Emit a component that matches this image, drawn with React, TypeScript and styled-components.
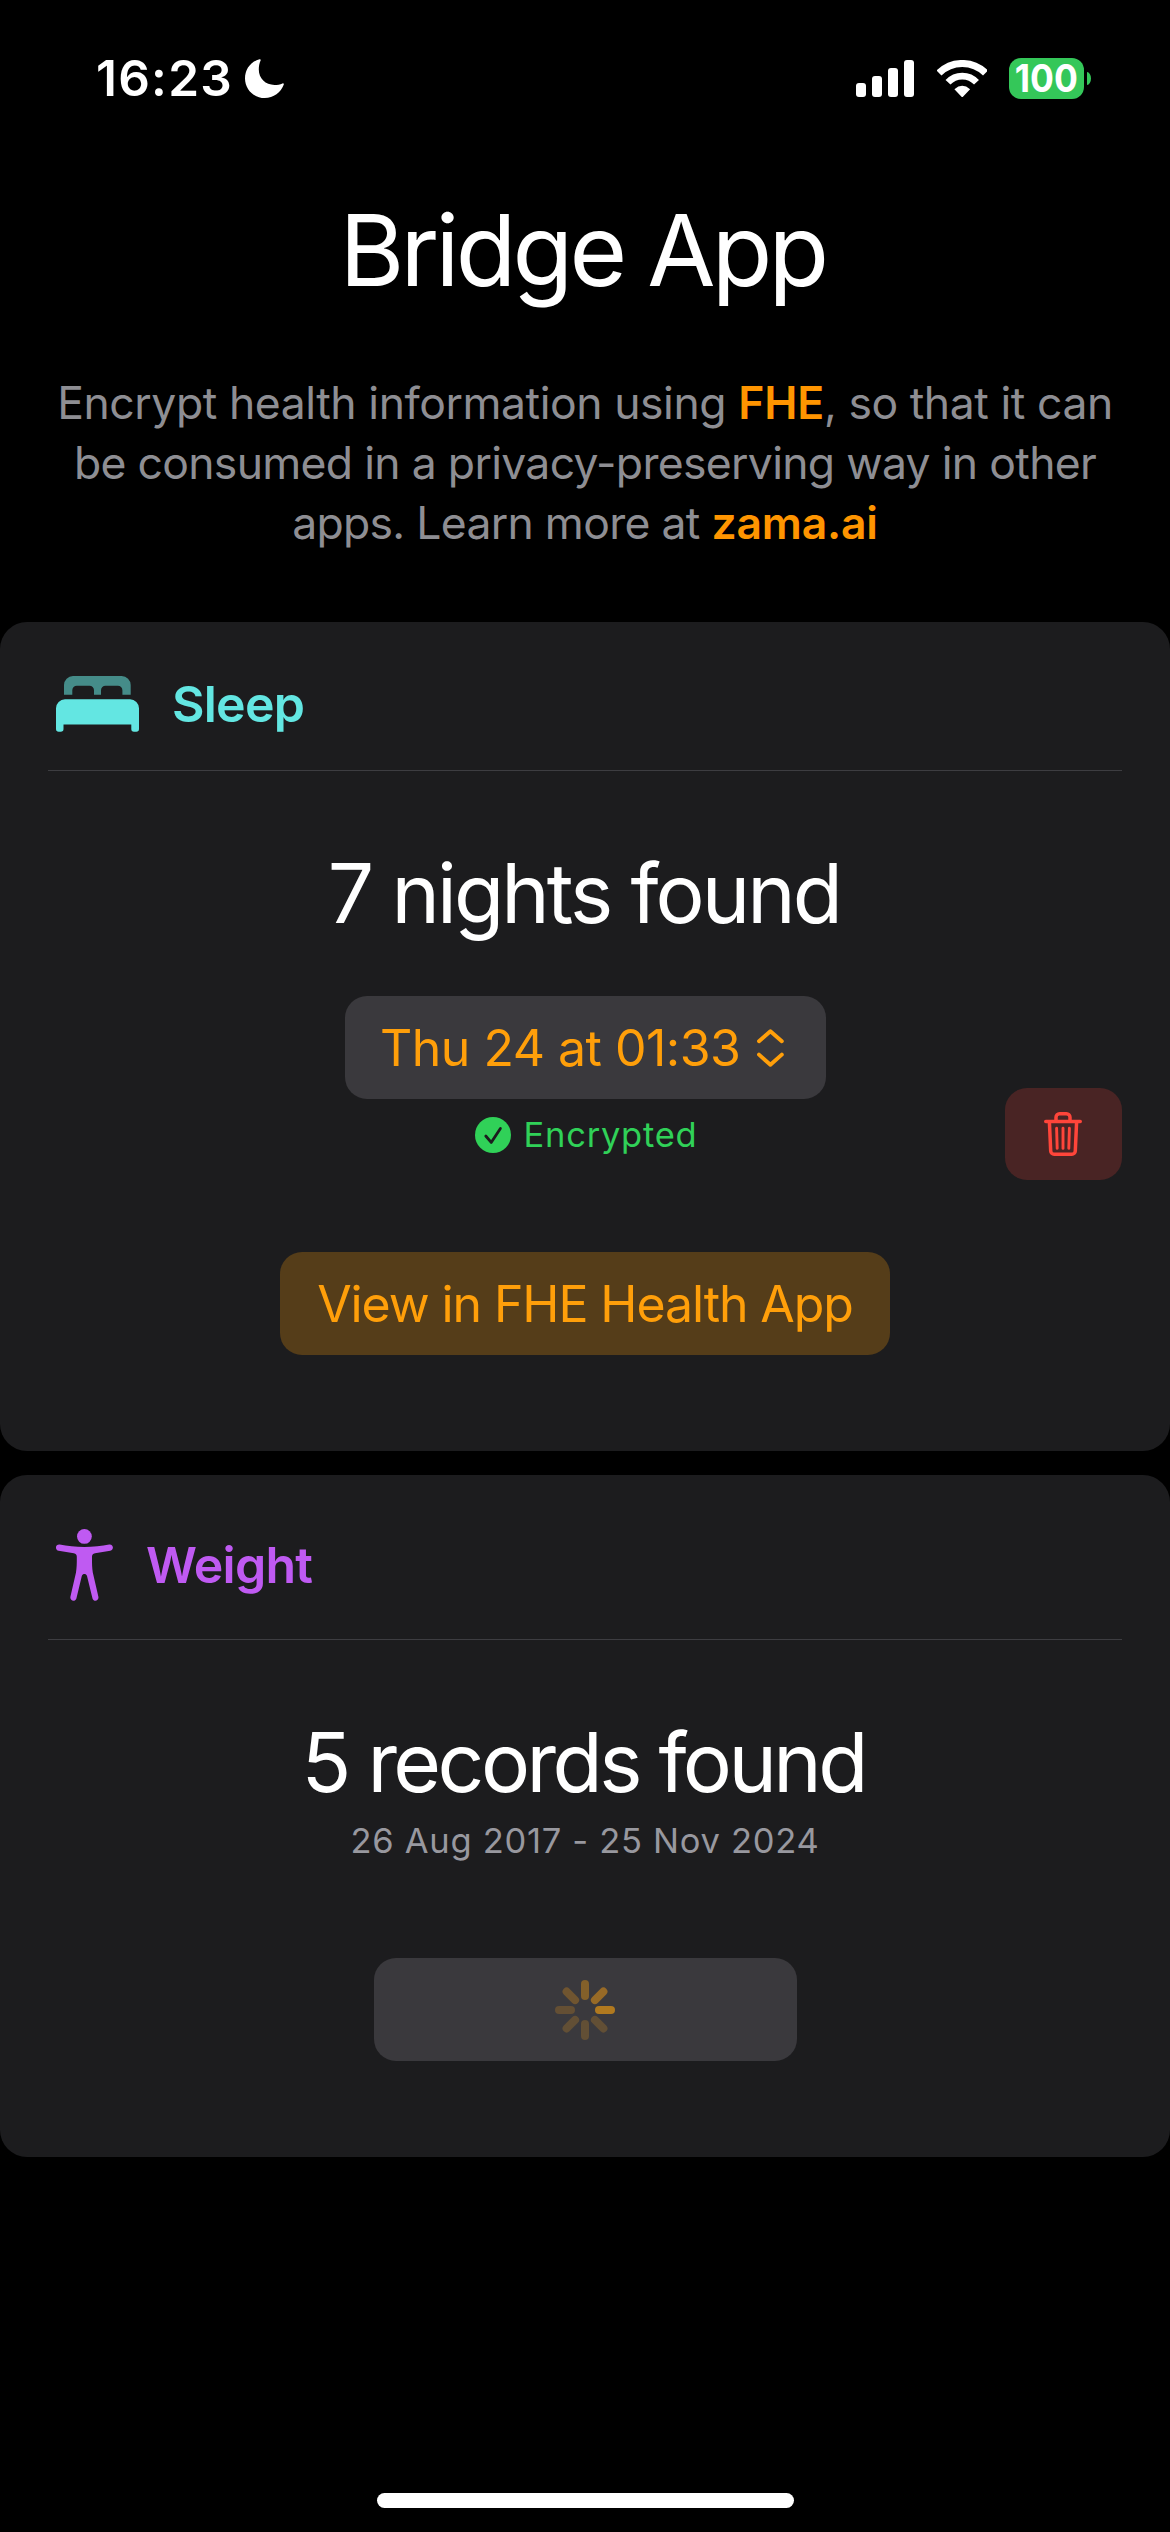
import React from 'react';
import styled, { createGlobalStyle } from 'styled-components';

const GlobalStyle = createGlobalStyle`
  *, *::before, *::after { box-sizing: border-box; }
  body {
    margin: 0;
    background: #000;
    color: #fff;
    font-family: Inter, "Liberation Sans", sans-serif;
  }
  svg { display: block; flex: none; }
  button { font: inherit; border: 0; margin: 0; padding: 0; }
`;

const Screen = styled.main`
  display: flex;
  flex-direction: column;
  width: 1170px;
  height: 2532px;
  background: #000;
  overflow: hidden;
`;

const StatusBar = styled.header`
  display: flex;
  align-items: center;
  justify-content: space-between;
  height: 60px;
  margin-top: 48px;
  padding: 0 79px 0 96px;
`;

const Clock = styled.div`
  display: flex;
  align-items: center;
  gap: 12px;
  font-size: 49.5px;
  font-weight: 570;
  line-height: 60px;
  letter-spacing: 1.25px;
`;

const Indicators = styled.div`
  display: flex;
  align-items: center;
`;

const Signal = styled.div`
  display: flex;
  align-items: flex-end;
  gap: 6px;
  height: 37px;
`;

const SignalBar = styled.i<{ $height: number }>`
  width: 10px;
  height: ${p => p.$height}px;
  border-radius: 3px;
  background: #fff;
`;

const WifiIcon = styled.svg`
  margin: 0 22px 0 22.5px;
`;

const Battery = styled.div`
  display: flex;
  align-items: center;
  justify-content: center;
  width: 75px;
  height: 41px;
  border-radius: 12px;
  background: #34c759;
`;

const BatteryLevel = styled.span`
  font-size: 38.5px;
  font-weight: 700;
  line-height: 41px;
  transform: scaleX(0.92);
`;

const BatteryCap = styled.i`
  width: 4px;
  height: 13px;
  margin-left: 3px;
  border-radius: 0 4px 4px 0 / 0 6.5px 6.5px 0;
  background: #34c759;
`;

const Title = styled.h1`
  margin: 82px 0 63px;
  padding-right: 5px;
  font-size: 99px;
  font-weight: 400;
  line-height: 120px;
  letter-spacing: -3.82px;
  text-align: center;
`;

const Intro = styled.p`
  margin: 0 0 69px;
  color: #8e8e93;
  font-size: 44.5px;
  line-height: 60px;
  text-align: center;
`;

const IntroLine = styled.span<{ $spacing: number }>`
  display: block;
  white-space: nowrap;
  letter-spacing: ${p => p.$spacing}px;
`;

const Link = styled.a`
  color: #ff9500;
  font-weight: 600;
  letter-spacing: -0.2px;
`;

const Card = styled.section`
  display: flex;
  flex-direction: column;
  margin-bottom: 24px;
  padding: 0 48px 96px;
  border-radius: 27px;
  background: #1c1c1e;
`;

const CardHeader = styled.div<{ $color: string; $height: number }>`
  display: flex;
  align-items: center;
  gap: 33px;
  height: ${p => p.$height}px;
  padding: 16px 8px 0;
  color: ${p => p.$color};
`;

const CardTitle = styled.h2`
  margin: 0;
  font-size: 50px;
  font-weight: 560;
  line-height: 60px;
  letter-spacing: -0.75px;
`;

const Divider = styled.hr`
  width: 100%;
  height: 1px;
  margin: 0;
  border: 0;
  background: #3d3d41;
`;

const CardBody = styled.div`
  display: flex;
  flex-direction: column;
  align-items: center;
  padding-top: 73px;
`;

const Count = styled.h3<{ $spacing: number; $nudge: number }>`
  margin: 0;
  padding-right: ${p => p.$nudge}px;
  font-size: 82px;
  font-weight: 400;
  line-height: 100px;
  letter-spacing: ${p => p.$spacing}px;
`;

const Button = styled.button<{ $width: number; $tinted?: boolean }>`
  display: flex;
  align-items: center;
  justify-content: center;
  width: ${p => p.$width}px;
  height: 103px;
  border-radius: 22px;
  background: ${p => (p.$tinted ? '#553d19' : '#3a393d')};
  color: #ff9f0a;
  font-size: 50px;
  line-height: 60px;
  white-space: nowrap;
`;

const NightPicker = styled(Button)`
  justify-content: flex-start;
  gap: 16.5px;
  margin-top: 52px;
  padding: 1px 0 0 35.5px;
  letter-spacing: -0.51px;
`;

const ViewButton = styled(Button)`
  margin-top: 83px;
  padding-top: 1px;
  letter-spacing: -1.1px;
`;

const LoadingButton = styled(Button)`
  margin-top: 93px;
`;

const StatusRow = styled.div`
  display: grid;
  grid-template-columns: 1fr auto 1fr;
  align-items: center;
  width: 100%;
  height: 70px;
`;

const Encrypted = styled.div`
  display: flex;
  grid-column: 2;
  align-items: center;
  gap: 13px;
  padding: 1px 0 0 2px;
  color: #30d158;
  font-size: 34.5px;
  line-height: 42px;
  letter-spacing: 0.76px;
`;

const DeleteButton = styled.button`
  display: flex;
  grid-column: 3;
  justify-self: end;
  align-items: center;
  justify-content: center;
  width: 117px;
  height: 92px;
  margin: -11px 0;
  padding-right: 1px;
  border-radius: 22px;
  background: #492424;
`;

const DateRange = styled.p`
  margin: 4px 0 0;
  color: #98989f;
  font-size: 34.5px;
  line-height: 48px;
  letter-spacing: 0.71px;
`;

const HomeIndicator = styled.div`
  width: 417px;
  height: 15px;
  margin: auto auto 24px;
  border-radius: 8px;
  background: #fff;
`;

const Moon = () => (
  <svg width="39" height="39" viewBox="0 0 39 39" fill="#fff">
    <path d="M14.5.3C6 2.5 0 10 0 19.5 0 30.3 8.7 39 19.7 39c8.8 0 16.3-5.5 19.1-13.4.2-.9-.4-1.6-1.3-1.2-2.5 1-5 1.5-8 1.5-9 0-15.7-6.4-15.7-15.4 0-3.5.6-6.5 1.8-9.1.4-.8-.3-1.4-1.1-1.1Z" />
  </svg>
);

const Wifi = () => (
  <WifiIcon width="50.5" height="37" viewBox="0 0 50.5 37" fill="none" stroke="#fff">
    <path d="M2 13A33.1 33.1 0 0 1 48.5 13" strokeWidth="7" />
    <path d="M11 22.3A19.4 19.4 0 0 1 39.5 22.3" strokeWidth="6.7" />
    <path d="M17.4 29.3Q25.25 22.4 33.1 29.3L26.2 36.4Q25.25 37.4 24.3 36.4Z" fill="#fff" stroke="none" />
  </WifiIcon>
);

const Bed = () => (
  <svg width="83" height="56" viewBox="0 0 83 56" fill="currentColor">
    <path
      fill="#458c89"
      d="M8 18.7V9a9 9 0 0 1 9-9H65.7a9 9 0 0 1 9 9V18.7H66.4V14.2a4.5 4.5 0 0 0-4.5-4.5H49.5A4.5 4.5 0 0 0 45 14.2V18.7H38V14.2a4.5 4.5 0 0 0-4.5-4.5H20.8a4.5 4.5 0 0 0-4.5 4.5V18.7Z"
    />
    <path d="M0 32.3a9 9 0 0 1 9-9H74a9 9 0 0 1 9 9V53a2.7 2.7 0 0 1-2.7 2.7H78A2.7 2.7 0 0 1 75.3 53V48.5H7.5V53a2.7 2.7 0 0 1-2.7 2.7H2.7A2.7 2.7 0 0 1 0 53Z" />
  </svg>
);

const Figure = () => (
  <svg width="57" height="72" viewBox="0 0 57 72" fill="currentColor">
    <circle cx="28.4" cy="7.4" r="7.4" />
    <path d="M3.7 15.5C11 17 20 17.9 28.4 17.9S46 17 53.2 15.5C57.6 15 58.2 20.8 54.3 21.8L39 24.2C36.8 24.6 36 25.7 36 27.8 36 33 35.9 38 36.8 43.5L42.4 67.8C43.2 72 37.8 73.6 36.5 69.4L31 47C30 44.4 26.8 44.4 25.8 47L20.4 69.4C19 73.6 13.6 72 14.4 67.8L20 43.5C20.9 38 20.8 33 20.8 27.8 20.8 25.7 20 24.6 17.8 24.2L2.6 21.8C-1.3 20.8-.8 15 3.7 15.5Z" />
  </svg>
);

const UpDown = () => (
  <svg width="27" height="38" viewBox="0 0 27 38" fill="none" stroke="currentColor" strokeWidth="3.9" strokeLinecap="round" strokeLinejoin="round">
    <path d="M2 12.2 13.4 2.2 24.8 12.2M2 25.6 13.4 35.8 24.8 25.6" />
  </svg>
);

const Check = () => (
  <svg width="36" height="36" viewBox="0 0 36 36" fill="none">
    <circle cx="18" cy="18" r="18" fill="currentColor" />
    <path d="M10.8 19 16.2 25.4 25.4 11.4" stroke="#1c1c1e" strokeWidth="2.8" strokeLinecap="round" strokeLinejoin="round" />
  </svg>
);

const Trash = () => (
  <svg width="38" height="44" viewBox="0 0 38 44" fill="none" stroke="#ff453a" strokeWidth="3.5" strokeLinecap="round" strokeLinejoin="round">
    <path d="M1.75 9.6H36.25" />
    <path d="M12 9V5.2A3.5 3.5 0 0 1 15.5 1.75H22.5A3.5 3.5 0 0 1 26 5.2V9" />
    <path d="M5.4 10 6.7 39A3.4 3.4 0 0 0 10.1 42.2H27.9A3.4 3.4 0 0 0 31.3 39L32.6 10" />
    <path d="M12.6 16.2 13.2 36.4M19 16.2V36.4M25.4 16.2 24.8 36.4" strokeWidth="2.9" />
  </svg>
);

const spokes = ['#83602a', '#976a27', '#b0791f', '#624f35', '#624f35', '#624f35', '#644f34', '#705530'];

const Spinner = () => (
  <svg width="60" height="60" viewBox="-30 -30 60 60">
    {spokes.map((color, i) => (
      <rect key={i} x="-4" y="-30" width="8" height="20" rx="4" fill={color} transform={`rotate(${i * 45})`} />
    ))}
  </svg>
);

export default function App() {
  return (
    <Screen>
      <GlobalStyle />
      <StatusBar>
        <Clock>
          16:23
          <Moon />
        </Clock>
        <Indicators>
          <Signal>
            {[14, 21, 29, 37].map(h => (
              <SignalBar key={h} $height={h} />
            ))}
          </Signal>
          <Wifi />
          <Battery>
            <BatteryLevel>100</BatteryLevel>
          </Battery>
          <BatteryCap />
        </Indicators>
      </StatusBar>

      <Title>Bridge App</Title>
      <Intro>
        <IntroLine $spacing={-0.44}>
          Encrypt health information using <Link>FHE</Link>, so that it can
        </IntroLine>
        <IntroLine $spacing={-0.69}>be consumed in a privacy-preserving way in other</IntroLine>
        <IntroLine $spacing={-0.7}>
          apps. Learn more at <Link>zama.ai</Link>
        </IntroLine>
      </Intro>

      <Card>
        <CardHeader $color="#63e6e2" $height={148}>
          <Bed />
          <CardTitle>Sleep</CardTitle>
        </CardHeader>
        <Divider />
        <CardBody>
          <Count $spacing={-2.92} $nudge={2}>7 nights found</Count>
          <NightPicker $width={481}>
            Thu 24 at 01:33
            <UpDown />
          </NightPicker>
          <StatusRow>
            <Encrypted>
              <Check />
              Encrypted
            </Encrypted>
            <DeleteButton aria-label="Delete">
              <Trash />
            </DeleteButton>
          </StatusRow>
          <ViewButton $width={610} $tinted>View in FHE Health App</ViewButton>
        </CardBody>
      </Card>

      <Card>
        <CardHeader $color="#bf5af2" $height={164}>
          <Figure />
          <CardTitle>Weight</CardTitle>
        </CardHeader>
        <Divider />
        <CardBody>
          <Count $spacing={-3.55} $nudge={3.5}>5 records found</Count>
          <DateRange>26 Aug 2017 - 25 Nov 2024</DateRange>
          <LoadingButton $width={423} aria-label="Loading">
            <Spinner />
          </LoadingButton>
        </CardBody>
      </Card>

      <HomeIndicator />
    </Screen>
  );
}
